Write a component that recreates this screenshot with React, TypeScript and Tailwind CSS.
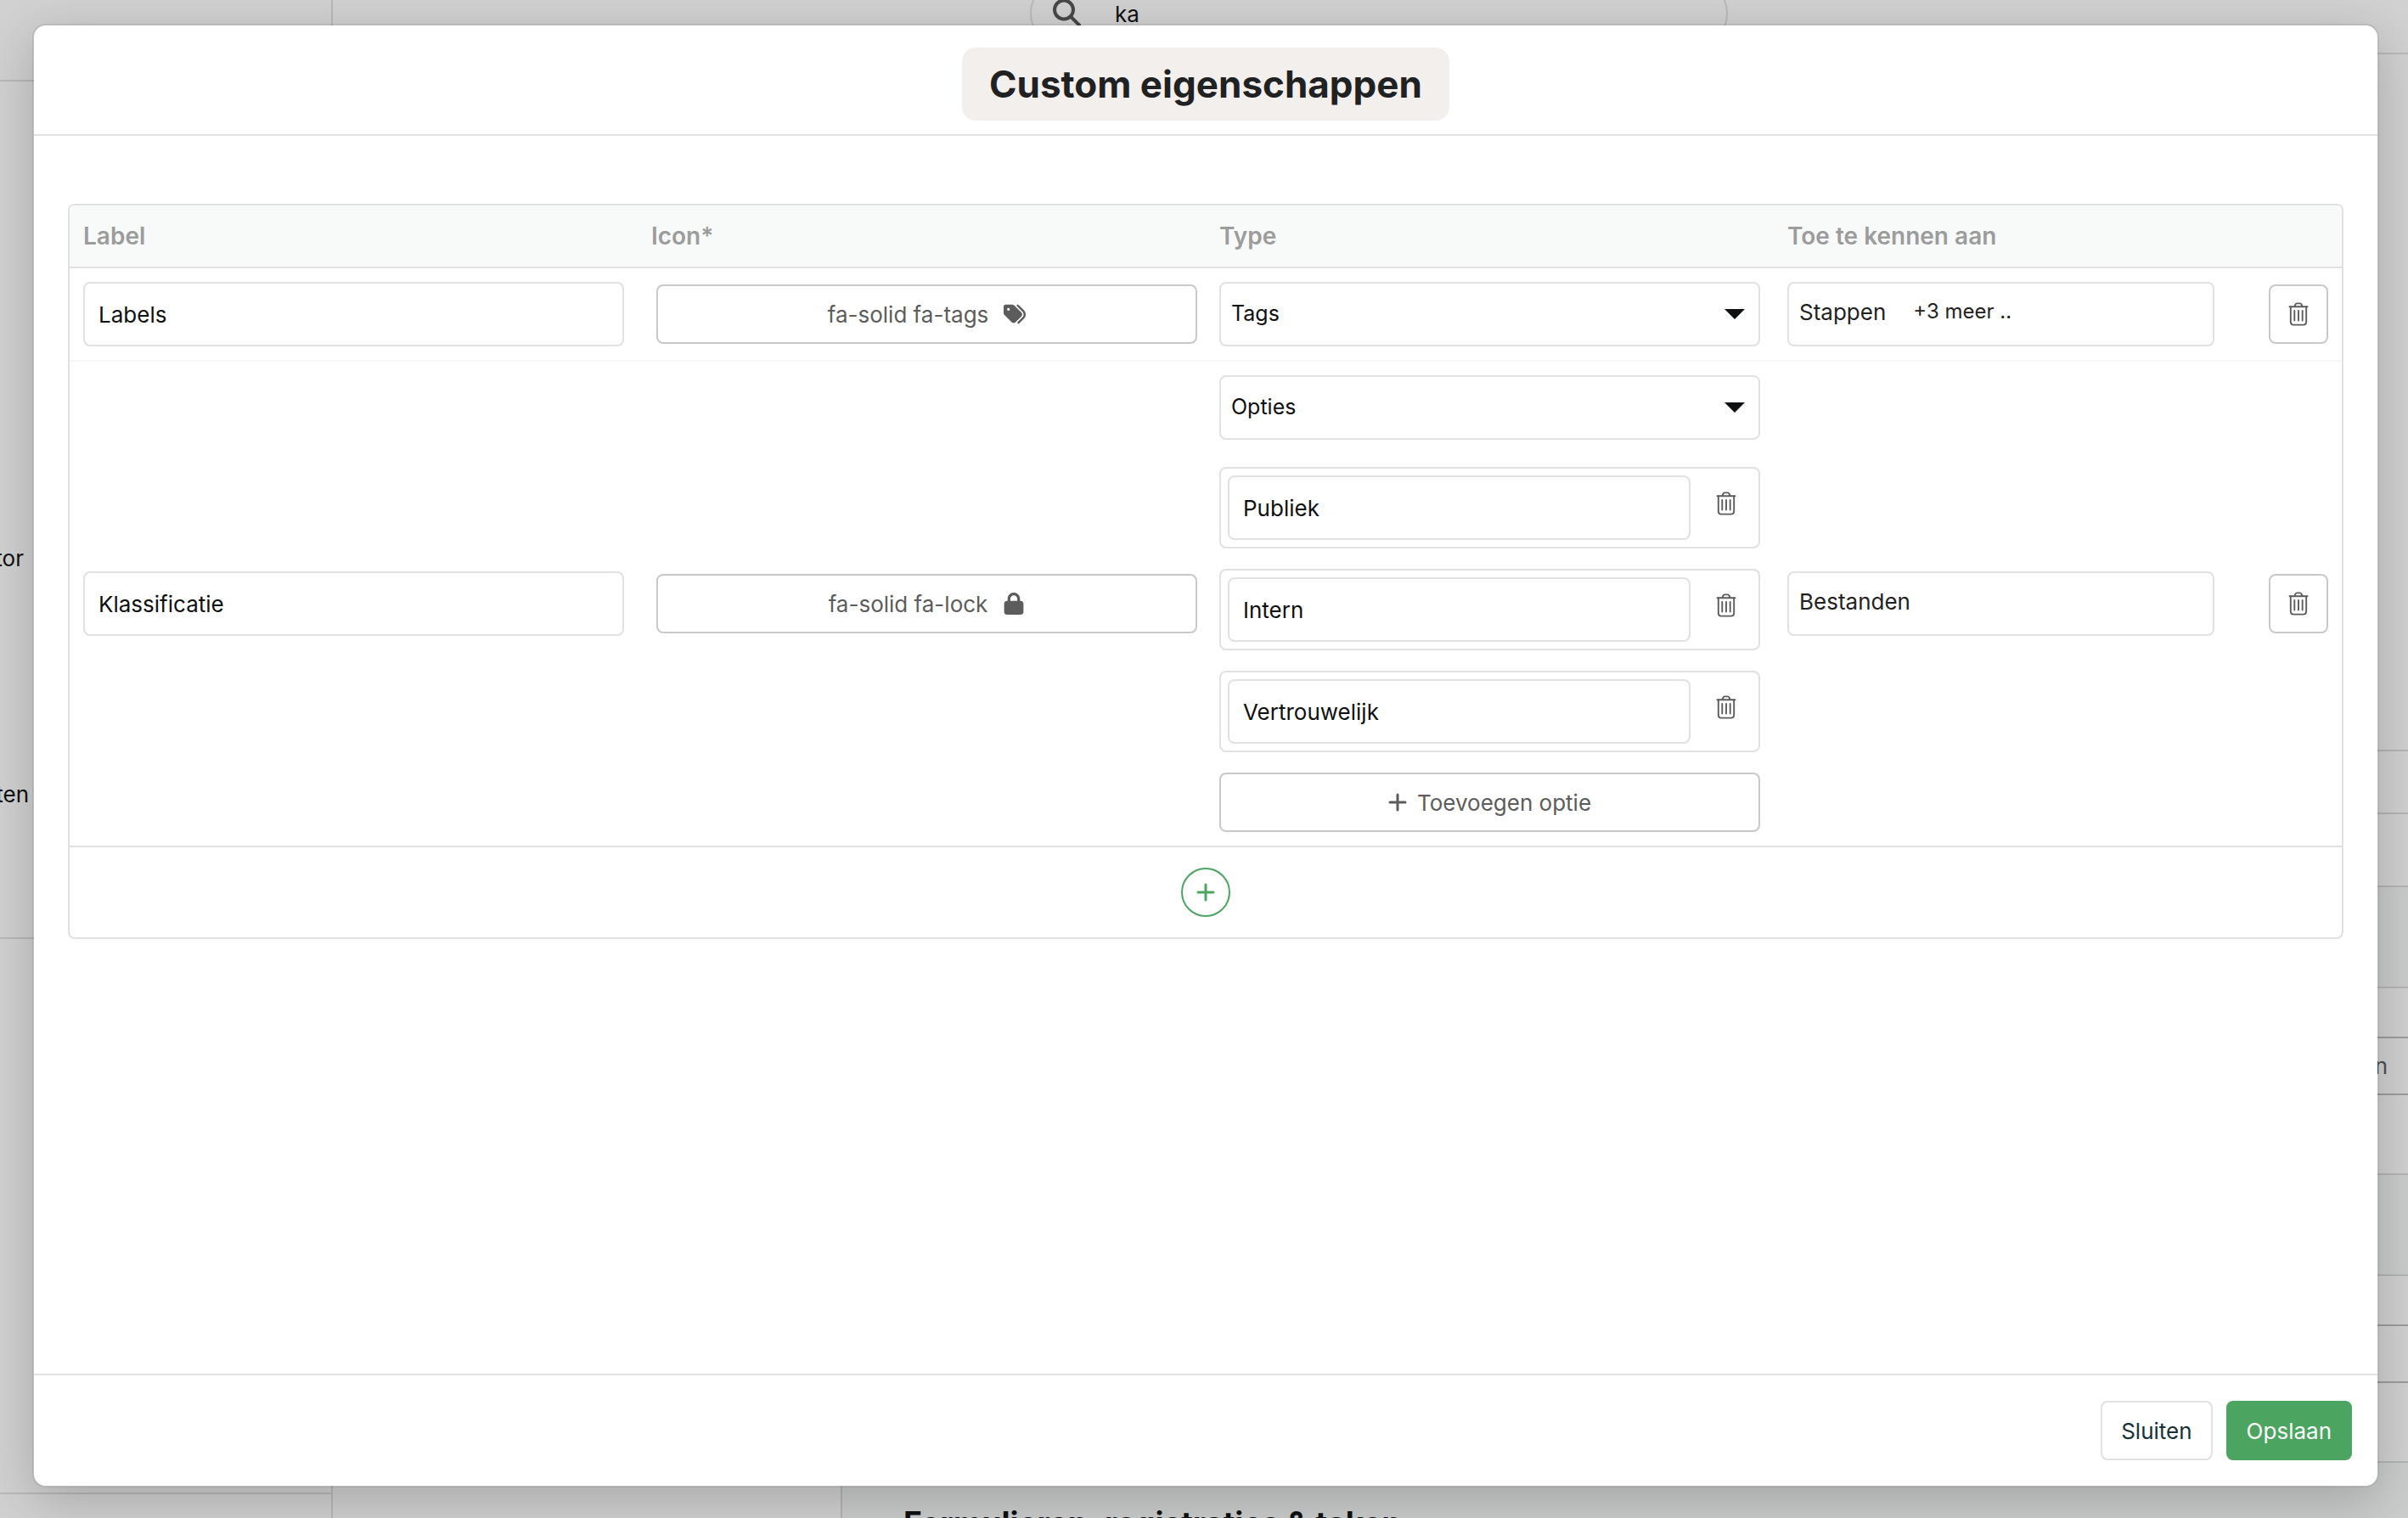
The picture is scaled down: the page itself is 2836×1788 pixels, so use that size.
import React from "react";
import { FaLock, FaTags } from "react-icons/fa6";

const inputClass =
  "block h-[76px] w-full min-w-0 rounded-lg border-2 border-[#e1e1e1] bg-white px-4 text-[26px] text-[#0f1011]";
const outlineButton =
  "flex h-[70px] items-center justify-center rounded-lg border-2 border-[#c9c9c9] bg-white text-[26px] text-[#5c5c5c]";

function TrashIcon() {
  return (
    <svg width="24" height="28" viewBox="0 0 24 28" fill="none" stroke="#5c5c5c" strokeWidth="1.9" strokeLinecap="round" aria-hidden="true">
      <path d="M1.5 5.2h21M7.4 5l1-2.4Q9 1.4 10.2 1.4h3.6q1.2 0 1.8 1.2l1 2.4" />
      <path d="M2.8 5.4V23Q2.8 26.6 6.4 26.6h11.2q3.6 0 3.6-3.6V5.4" />
      <path d="M7.3 10v11.5M12 10v11.5M16.7 10v11.5" />
    </svg>
  );
}

function PlusIcon({ size }: { size: number }) {
  return (
    <svg width={size} height={size} viewBox="0 0 22 22" fill="none" stroke="currentColor" strokeWidth="3" strokeLinecap="round" aria-hidden="true">
      <path d="M11 2v18M2 11h18" />
    </svg>
  );
}

function Select({ label, value, options }: { label: string; value: string; options: string[] }) {
  return (
    <div className="relative">
      <select
        aria-label={label}
        defaultValue={value}
        className="block h-[76px] w-full appearance-none rounded-lg border-2 border-[#e1e1e1] bg-white px-3 text-[25px] text-[#0f1011]"
      >
        {options.map((o) => (
          <option key={o}>{o}</option>
        ))}
      </select>
      <svg width="24" height="12" viewBox="0 0 24 12" className="pointer-events-none absolute top-8 right-[18px]" aria-hidden="true">
        <path d="M0 0h24L12 12z" fill="#0f1011" />
      </svg>
    </div>
  );
}

function OptionRow({ value }: { value: string }) {
  return (
    <div className="flex gap-4 rounded-lg border-2 border-[#e1e1e1] p-2">
      <input aria-label={`Optie ${value}`} defaultValue={value} className={inputClass} />
      <button type="button" aria-label={`Verwijder ${value}`} className="flex h-[66px] w-14 shrink-0 items-center justify-center pr-1">
        <TrashIcon />
      </button>
    </div>
  );
}

function Assign({ value, more }: { value: string; more?: string }) {
  return (
    <button
      type="button"
      className="flex h-[76px] w-full items-center gap-8 rounded-lg border-2 border-[#e1e1e1] bg-white px-3 pb-1.5 text-left text-[26px] text-[#1f2122]"
    >
      <span>{value}</span>
      {more && <span className="text-[24px]">{more}</span>}
    </button>
  );
}

function DeleteCell({ name }: { name: string }) {
  return (
    <td className="px-4">
      <button type="button" aria-label={`Verwijder ${name}`} className={`${outlineButton} ml-auto w-[70px]`}>
        <TrashIcon />
      </button>
    </td>
  );
}

function IconCell({ name, children }: { name: string; children: React.ReactNode }) {
  return (
    <td className="pr-[10px] pl-[22px]">
      <button type="button" className={`${outlineButton} w-full gap-[18px]`}>
        {name}
        {children}
      </button>
    </td>
  );
}

const types = ["Tags", "Opties"];

function PropertiesTable() {
  return (
    <div className="overflow-hidden rounded-lg border-2 border-[#e1e1e1]">
      <table className="w-full table-fixed border-separate border-spacing-0">
        <colgroup>
          <col className="w-[25%]" />
          <col className="w-[25%]" />
          <col className="w-[25%]" />
          <col className="w-[20%]" />
          <col className="w-[5%]" />
        </colgroup>
        <thead>
          <tr className="h-[74px] bg-[#f8faf9] text-left text-[28px] text-[#9c9c9c]">
            {["Label", "Icon*", "Type", "Toe te kennen aan"].map((h) => (
              <th key={h} scope="col" className="border-b-2 border-[#e1e1e1] px-4 font-semibold">
                {h}
              </th>
            ))}
            <td className="border-b-2 border-[#e1e1e1]" />
          </tr>
        </thead>
        <tbody>
          <tr className="*:border-b-2 *:border-[#f7f7f7] *:py-4">
            <td className="px-4">
              <input aria-label="Label" defaultValue="Labels" className={inputClass} />
            </td>
            <IconCell name="fa-solid fa-tags">
              <FaTags size={26} />
            </IconCell>
            <td className="px-4">
              <Select label="Type" value="Tags" options={types} />
            </td>
            <td className="px-4">
              <Assign value="Stappen" more="+3 meer .." />
            </td>
            <DeleteCell name="Labels" />
          </tr>
          <tr className="*:border-b-2 *:border-[#e1e1e1] *:py-4">
            <td className="px-4">
              <input aria-label="Label" defaultValue="Klassificatie" className={inputClass} />
            </td>
            <IconCell name="fa-solid fa-lock">
              <FaLock size={26} />
            </IconCell>
            <td className="px-4">
              <Select label="Type" value="Opties" options={types} />
              <div className="mt-8 flex flex-col gap-6">
                {["Publiek", "Intern", "Vertrouwelijk"].map((o) => (
                  <OptionRow key={o} value={o} />
                ))}
                <button type="button" className={`${outlineButton} w-full gap-3`}>
                  <PlusIcon size={22} />
                  Toevoegen optie
                </button>
              </div>
            </td>
            <td className="px-4">
              <Assign value="Bestanden" />
            </td>
            <DeleteCell name="Klassificatie" />
          </tr>
        </tbody>
      </table>
      <div className="flex h-[106px] items-center justify-center">
        <button
          type="button"
          aria-label="Toevoegen eigenschap"
          className="flex size-[58px] items-center justify-center rounded-full border-2 border-[#4ba560] text-[#4ba560]"
        >
          <PlusIcon size={22} />
        </button>
      </div>
    </div>
  );
}

/* Dimmed page behind the dialog; only its edges stay visible. */
function Backdrop() {
  return (
    <div className="absolute inset-0 flex overflow-hidden bg-[#d1d1d1] text-[26px] text-[#0f1011]">
      <div className="flex w-[392px] shrink-0 flex-col border-r-2 border-[#b9b9b9]">
        <div className="h-24 shrink-0 border-b-2 border-[#b9b9b9]" />
        <div className="h-[1010px] shrink-0 border-b-2 border-[#b9b9b9]">
          <div className="flex w-7 justify-end pt-[542px] whitespace-nowrap">Editor</div>
          <div className="flex w-[34px] justify-end pt-[239px] whitespace-nowrap">Projecten</div>
        </div>
        <div className="h-[654px] shrink-0 border-b-2 border-[#b9b9b9]" />
      </div>
      <div className="flex min-w-0 flex-1 flex-col">
        <div className="h-16 shrink-0 border-b-2 border-[#b9b9b9] pl-5">
          <div className="mx-auto -mt-6 flex h-20 w-[822px] items-center gap-10 rounded-full border-2 border-[#b9b9b9] pl-6">
            <svg width="34" height="34" viewBox="0 0 34 34" fill="none" stroke="#484848" strokeWidth="4" strokeLinecap="round" aria-hidden="true">
              <circle cx="14" cy="12.5" r="11" />
              <path d="M22 20.5 32 30.5" />
            </svg>
            <span>ka</span>
          </div>
        </div>
        <div className="flex min-h-0 flex-1">
          <div className="w-[600px] shrink-0 border-r-2 border-[#b3b5b4]" />
          <div className="flex min-w-0 flex-1 flex-col *:shrink-0 *:border-b-2 *:border-[#b5b5b5]">
            <div className="h-[821px]" />
            <div className="h-[74px]" />
            <div className="h-[86px]" />
            <div className="h-[119px] bg-[#cacdcb]" />
            <div className="h-[59px] border-[#9d9d9d]!" />
            <div className="flex h-[67px] items-center justify-end border-[#9d9d9d]! pr-6 text-[#4d4d4d]">Toevoegen</div>
            <div className="h-[94px]" />
            <div className="h-[119px] bg-[#cacdcb]" />
            <div className="h-[59px] border-[#9d9d9d]!" />
            <div className="h-[67px] border-[#9d9d9d]!" />
            <div className="h-[94px]" />
            <div className="h-40 border-b-0! bg-[#cacdcb] pt-[46px] pl-[72px]">
              <h2 className="text-[37px] leading-[50px] font-bold">Formulieren, registraties &amp; taken</h2>
            </div>
          </div>
        </div>
      </div>
    </div>
  );
}

export default function App() {
  return (
    <div className="relative flex h-screen overflow-hidden pt-7 pr-[34px] pb-9 pl-[38px] font-['Inter',sans-serif]">
      <Backdrop />
      <section
        role="dialog"
        aria-labelledby="dialog-title"
        className="relative flex min-w-0 flex-1 flex-col rounded-2xl border-2 border-black/8 bg-white bg-clip-padding shadow-[0_16px_60px_rgba(0,0,0,0.2)]"
      >
        <header className="flex h-[130px] shrink-0 items-center justify-center border-b-2 border-[#e1e1e1] pt-2.5">
          <h1 id="dialog-title" className="rounded-2xl bg-[#f3efec] px-8 py-4 text-[44px] leading-[54px] font-bold text-[#1f2122]">
            Custom eigenschappen
          </h1>
        </header>
        <main className="min-h-0 flex-1 px-10 pt-20">
          <PropertiesTable />
        </main>
        <footer className="flex shrink-0 items-center justify-end gap-4 border-t-2 border-[#e1e1e1] p-[30px] text-[26px]">
          <button type="button" className="h-[70px] rounded-lg border-2 border-[#e1e1e1] px-[22px] text-[#15323a]">
            Sluiten
          </button>
          <button type="button" className="h-[70px] rounded-lg bg-[#4ba560] px-6 text-white">
            Opslaan
          </button>
        </footer>
      </section>
    </div>
  );
}
